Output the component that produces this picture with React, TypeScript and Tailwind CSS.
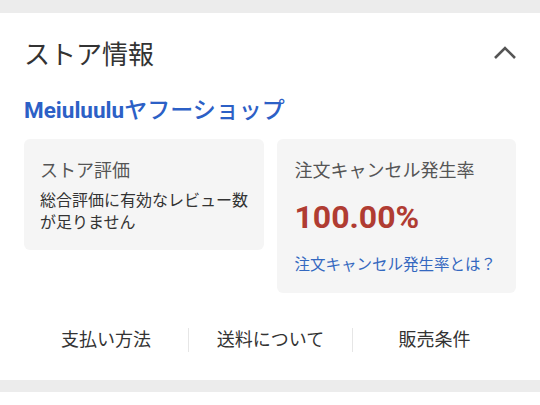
import React from "react";

const tabs = ["支払い方法", "送料について", "販売条件"];

export default function App() {
    return (
        <main className="w-[540px] h-[405px] overflow-hidden bg-white font-['Roboto','Noto_Sans_CJK_JP',sans-serif]">
            <div className="h-[13px] bg-[#ececec]" />

            <div className="px-6 pt-[29px] flex items-start justify-between">
                <h1 className="text-[26px] leading-[26px] text-[#333333]">ストア情報</h1>
                <svg width="24" height="15" viewBox="0 0 24 15" className="mt-[3px] mr-[-1px]">
                    <polyline
                        points="2,13 12,3 22,13"
                        fill="none"
                        stroke="#555555"
                        strokeWidth="2.6"
                    />
                </svg>
            </div>

            <p className="px-6 mt-[28px] h-[28px] leading-[28px] text-[#2c60c6]">
                <span className="text-[22.5px] font-bold">Meiuluulu</span>
                <span className="text-[23px] font-medium">ヤフーショップ</span>
            </p>

            <div className="px-6 mt-[15px] grid grid-cols-2 gap-[13px] items-start">
                <div className="bg-[#f5f5f5] rounded-md pl-4 pr-3 pt-5 pb-4">
                    <p className="text-[18px] leading-[24px] text-[#555555]">ストア評価</p>
                    <p className="mt-[7px] text-[16px] leading-[22px] text-[#333333]">
                        総合評価に有効なレビュー数が足りません
                    </p>
                </div>
                <div className="bg-[#f5f5f5] rounded-md pl-[18px] pr-3 pt-5 pb-[17px]">
                    <p className="text-[18px] leading-[24px] text-[#555555]">注文キャンセル発生率</p>
                    <p className="mt-[15px] text-[32px] leading-[38px] font-bold text-[#b03c32]">
                        100.00%
                    </p>
                    <p className="mt-[18px] text-[15.5px] leading-[22px] text-[#3468c0]">
                        注文キャンセル発生率とは？
                    </p>
                </div>
            </div>

            <div className="px-6 mt-[35px] grid grid-cols-3">
                {tabs.map((t, i) => (
                    <div
                        key={t}
                        className={
                            "h-[24px] flex items-center justify-center text-[18px] leading-[24px] text-[#333333] " +
                            (i > 0 ? "border-l border-[#e6e6e6]" : "")
                        }
                    >
                        {t}
                    </div>
                ))}
            </div>

            <div className="mt-[28px] h-[12px] bg-[#ececec]" />
        </main>
    );
}
